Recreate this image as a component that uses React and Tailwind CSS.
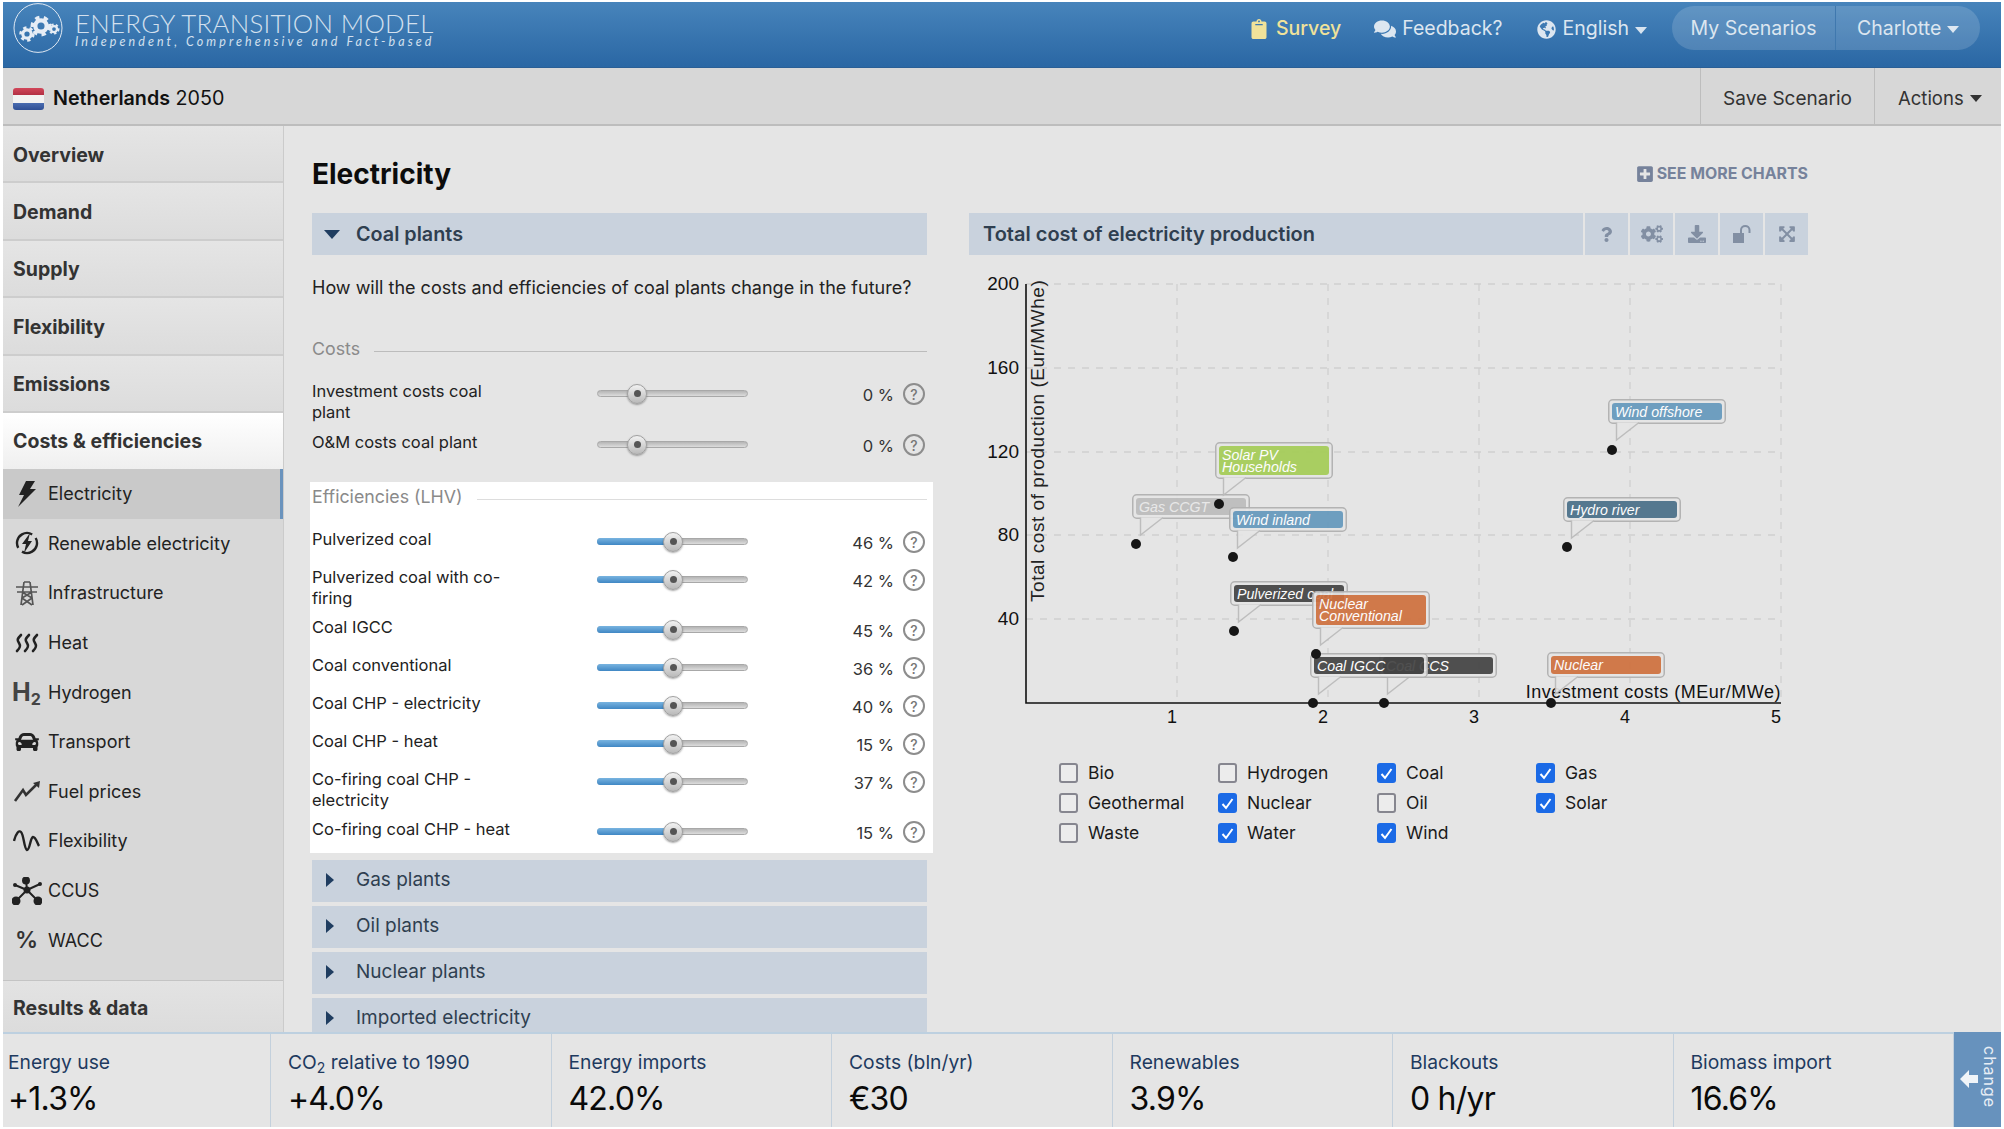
import React from 'react';
import { FaCar, FaClipboard, FaCogs, FaComments, FaDownload, FaExpandArrowsAlt, FaGlobeAmericas, FaPlusSquare, FaQuestion } from 'react-icons/fa';

const font = 'font-["Inter",sans-serif]';

const topNav = ['Overview', 'Demand', 'Supply', 'Flexibility', 'Emissions'];

const BoltIcon = () => (
  <svg width="24" height="28" viewBox="0 0 24 28">
    <path d="M11 1 H20 L15 9 H21 L3 27 L9 15 H4 Z" fill="#222" />
  </svg>
);
const RenewableIcon = () => (
  <svg width="26" height="26" viewBox="0 0 26 26">
    <circle cx="13" cy="13" r="10" fill="none" stroke="#222" strokeWidth="2.4" strokeDasharray="26 5.4" transform="rotate(-30 13 13)" />
    <path d="M16 3 L8 14 H12 L10 23 L18 11 H14 Z" fill="#222" />
  </svg>
);
const PylonIcon = () => (
  <svg width="26" height="26" viewBox="0 0 26 26" fill="none" stroke="#555" strokeWidth="1.7">
    <path d="M2 7 H24 M3 12 H23 M10 2 L7 25 M16 2 L19 25 M10 2 H16 M8 12 L18 18 M18 12 L8 18 M8 18 L18 25 M18 18 L8 25" />
  </svg>
);
const HeatIcon = () => (
  <svg width="26" height="20" viewBox="0 0 26 20" fill="none" stroke="#222" strokeWidth="2.6" strokeLinecap="round">
    <path d="M7 2 C3 6 3 7 5 10 C7 13 6 15 3 18" />
    <path d="M15 2 C11 6 11 7 13 10 C15 13 14 15 11 18" />
    <path d="M23 2 C19 6 19 7 21 10 C23 13 22 15 19 18" />
  </svg>
);
const FuelIcon = () => (
  <svg width="28" height="24" viewBox="0 0 28 24" fill="none" stroke="#333" strokeWidth="2.6">
    <path d="M2 22 L10 11 L13 16 L24 5" />
    <path d="M20 4 L27 2 L26 9 Z" fill="#333" stroke="none" />
  </svg>
);
const WaveIcon = () => (
  <svg width="28" height="24" viewBox="0 0 28 24" fill="none" stroke="#222" strokeWidth="2.4">
    <path d="M1 12 C3 4 6 1 8 3 C11 6 11 20 14 21 C17 21 17 9 20 8 C23 8 24 14 26 17" />
  </svg>
);
const NetworkIcon = () => (
  <svg width="30" height="28" viewBox="0 0 30 28" stroke="#222" strokeWidth="2" fill="#222">
    <path d="M15 13 L14 3 M15 13 L4 24 M15 13 L26 24 M15 13 L3 8 M15 13 L28 7" />
    <circle cx="14" cy="3.5" r="3" />
    <circle cx="15" cy="13" r="2.5" />
    <circle cx="4" cy="24" r="3.5" />
    <circle cx="26" cy="24" r="3.5" />
    <circle cx="3" cy="8" r="1" />
    <circle cx="28" cy="7" r="1" />
  </svg>
);
const UnlockIcon = () => (
  <svg width="20" height="20" viewBox="0 0 20 20" fill="none">
    <rect x="1" y="9" width="11" height="10" fill="currentColor" />
    <path d="M9 9 V6 C9 0.5 17.5 0.5 17.5 6 V9" stroke="currentColor" strokeWidth="2" />
  </svg>
);

const subNav = [
  { label: 'Electricity', icon: <BoltIcon />, active: true },
  { label: 'Renewable electricity', icon: <RenewableIcon /> },
  { label: 'Infrastructure', icon: <PylonIcon /> },
  { label: 'Heat', icon: <HeatIcon /> },
  { label: 'Hydrogen', icon: <span className="text-[25px] font-bold leading-none text-[#444]">H<sub className="text-[16px] leading-none">2</sub></span> },
  { label: 'Transport', icon: <FaCar size={24} className="text-[#222]" /> },
  { label: 'Fuel prices', icon: <FuelIcon /> },
  { label: 'Flexibility', icon: <WaveIcon /> },
  { label: 'CCUS', icon: <NetworkIcon /> },
  { label: 'WACC', icon: <span className="text-[23px] font-semibold leading-none text-[#333]">%</span> },
];

const costRows = [
  { label: 'Investment costs coal plant', value: 0, h: 'h-[51px]', knob: 39 },
  { label: 'O&M costs coal plant', value: 0, h: 'h-[38px]', knob: 39 },
];

const efficiencyRows = [
  { label: 'Pulverized coal', value: 46, h: 'h-[38px]' },
  { label: 'Pulverized coal with co-firing', value: 42, h: 'h-[50px]' },
  { label: 'Coal IGCC', value: 45, h: 'h-[38px]' },
  { label: 'Coal conventional', value: 36, h: 'h-[38px]' },
  { label: 'Coal CHP - electricity', value: 40, h: 'h-[38px]' },
  { label: 'Coal CHP - heat', value: 15, h: 'h-[38px]' },
  { label: 'Co-firing coal CHP - electricity', value: 37, h: 'h-[50px]' },
  { label: 'Co-firing coal CHP - heat', value: 15, h: 'h-[33px]' },
];

const kpis = [
  { label: 'Energy use', value: '+1.3%' },
  { label: <>CO<sub className="text-[14px]">2</sub> relative to 1990</>, value: '+4.0%' },
  { label: 'Energy imports', value: '42.0%' },
  { label: 'Costs (bln/yr)', value: '€30' },
  { label: 'Renewables', value: '3.9%' },
  { label: 'Blackouts', value: '0 h/yr' },
  { label: 'Biomass import', value: '16.6%' },
];

const filters = [
  ['Bio', false], ['Hydrogen', false], ['Coal', true], ['Gas', true],
  ['Geothermal', false], ['Nuclear', true], ['Oil', false], ['Solar', true],
  ['Waste', false], ['Water', true], ['Wind', true],
];

const labels = [
  { lines: ['Gas CCGT'], x: 1132, y: 494, h: 25, color: '#bdbdbd' },
  { lines: ['Solar PV', 'Households'], x: 1215, y: 442, h: 37, color: '#a5cd58' },
  { lines: ['Pulverized coal'], x: 1230, y: 581, h: 25, color: '#444444' },
  { lines: ['Wind inland'], x: 1229, y: 507, h: 25, color: '#6699bd' },
  { lines: ['Nuclear', 'Conventional'], x: 1312, y: 591, h: 38, color: '#cf713f' },
  { lines: ['Coal CCS'], x: 1379, y: 653, h: 25, color: '#444444' },
  { lines: ['Coal IGCC'], x: 1310, y: 653, h: 25, color: '#444444' },
  { lines: ['Nuclear'], x: 1547, y: 652, h: 26, color: '#cf713f' },
  { lines: ['Hydro river'], x: 1563, y: 497, h: 25, color: '#4b7089' },
  { lines: ['Wind offshore'], x: 1608, y: 399, h: 25, color: '#6699bd' },
];

const dots = [[1136, 544], [1219, 504], [1233, 557], [1234, 631], [1316, 654], [1313, 703], [1384, 703], [1551, 703], [1567, 547], [1612, 450]];

const Gear = ({ cx, cy, r }) => (
  <g>
    <circle cx={cx} cy={cy} r={r * 0.9} fill="none" stroke="#e6edf5" strokeWidth={r * 0.4} strokeDasharray={`${r * 0.45} ${r * 0.45}`} />
    <circle cx={cx} cy={cy} r={r * 0.6} fill="none" stroke="#e6edf5" strokeWidth={r * 0.45} />
  </g>
);

const Logo = () => (
  <svg width="50" height="50" viewBox="0 0 50 50" className="shrink-0">
    <ellipse cx="25" cy="25" rx="24" ry="24.4" fill="none" stroke="#dfe8f2" strokeWidth="1" />
    <Gear cx={14} cy={31} r={7} />
    <Gear cx={28} cy={23} r={9.5} />
    <Gear cx={41} cy={26} r={5} />
  </svg>
);

const Caret = ({ className = 'border-t-white/80' }) => (
  <span className={`inline-block w-0 h-0 border-x-[6px] border-x-transparent border-t-[7px] ${className}`} />
);

const Slider = ({ knob = 75, fill }) => (
  <div className="relative w-[151px] h-[7px] mt-[8px] rounded-full border border-[#a8a8a8] bg-gradient-to-b from-[#b5b5b5] to-[#dcdcdc] shrink-0">
    {fill && <div className="absolute -left-px -top-px h-[7px] w-[78px] rounded-l-full bg-gradient-to-b from-[#78b4e0] to-[#3f87c4]" />}
    <div
      className="absolute top-[-7.5px] w-5 h-5 -ml-2.5 rounded-full border border-[#a0a0a0] bg-gradient-to-b from-[#f2f2f2] to-[#b9b9b9] shadow-[0_1px_2px_rgba(0,0,0,0.35)] flex items-center justify-center"
      style={{ left: knob }}
    >
      <div className="w-[7px] h-[7px] rounded-full bg-[#555]" />
    </div>
  </div>
);

const SliderRow = ({ row, fill }) => (
  <div className={`flex items-start ${row.h}`}>
    <div className="w-[210px] -mt-px text-[16.5px] leading-[21px] text-[#222] shrink-0">{row.label}</div>
    <div className="ml-[75px]">
      <Slider knob={row.knob} fill={fill} />
    </div>
    <div className="w-[146px] pt-[3px] text-right text-[16.5px] leading-[21px] text-[#333] shrink-0">{row.value} %</div>
    <div className="ml-[9px] mt-px w-[22px] h-[22px] rounded-full border-2 border-[#8d8d8d] flex items-center justify-center text-[14px] font-medium text-[#777] shrink-0">?</div>
  </div>
);

const Section = ({ title, line }) => (
  <div className="flex items-center h-[21px]">
    <span className="text-[17.8px] text-[#8a8a8a]">{title}</span>
    <span className={`flex-1 ml-[14px] mt-[3px] h-px ${line}`} />
  </div>
);

const Accordion = ({ title }) => (
  <div className="flex items-center h-[42px] mb-[4px] bg-[#c9d2dd] shrink-0">
    <span className="ml-[14px] w-0 h-0 border-y-[7px] border-y-transparent border-l-[8px] border-l-[#1f3d60] -mt-[3px]" />
    <span className="ml-[22px] -mt-px text-[19px] text-[#2f3f50]">{title}</span>
  </div>
);

const Chart = () => {
  const gridX = [1177, 1328, 1479, 1630, 1781];
  const gridY = [284, 368, 452, 535, 619];
  return (
    <svg width="839" height="470" viewBox="969 262 839 470" className="block font-['Liberation_Sans',sans-serif]">
      {gridX.map((x) => <line key={x} x1={x} x2={x} y1="284" y2="703" stroke="#d0d0d0" strokeWidth="1.3" strokeDasharray="7 7" />)}
      {gridY.map((y) => <line key={y} x1="1026" x2="1781" y1={y} y2={y} stroke="#d0d0d0" strokeWidth="1.3" strokeDasharray="7 7" />)}
      <path d="M1026 284 V703 H1781" fill="none" stroke="#111" strokeWidth="1.6" />
      {['200', '160', '120', '80', '40'].map((t, i) => (
        <text key={t} x="1019" y={gridY[i] + 6} textAnchor="end" fontSize="19" fill="#111">{t}</text>
      ))}
      {['1', '2', '3', '4', '5'].map((t, i) => (
        <text key={t} x={gridX[i] - 5} y="723" textAnchor="middle" fontSize="18" fill="#111">{t}</text>
      ))}
      <text transform="translate(1044 602) rotate(-90)" fontSize="19" fill="#222" letterSpacing="0.55">Total cost of production (Eur/MWhe)</text>
      <text x="1781" y="698" textAnchor="end" fontSize="18" fill="#111" letterSpacing="0.5">Investment costs (MEur/MWe)</text>
      {labels.map((l) => (
        <g key={l.lines[0] + l.x} opacity="0.93">
          <rect x={l.x + 0.75} y={l.y + 0.75} width="116.5" height={l.h - 1.5} rx="4" fill="#e5e5e5" stroke="#b0b0b0" strokeWidth="1.5" />
          <rect x={l.x + 4} y={l.y + 4} width="110" height={l.h - 8} rx="3" fill={l.color} />
          <path d={`M${l.x + 8.5} ${l.y + l.h - 1.5} V${l.y + l.h + 16} L${l.x + 31} ${l.y + l.h - 1.5}`} fill="#e5e5e5" stroke="#bbb" strokeWidth="1.4" />
          {l.lines.map((line, i) => (
            <text key={line} x={l.x + 7} y={l.y + (l.lines.length > 1 ? 17.5 + i * 12.5 : 18)} fontSize="14.2" fontStyle="italic" fill={l.color === '#bdbdbd' ? '#e9e9e9' : '#fff'}>{line}</text>
          ))}
        </g>
      ))}
      {dots.map(([x, y]) => <circle key={x} cx={x} cy={y} r="5" fill="#161616" />)}
    </svg>
  );
};

const Checkbox = ({ checked }) => (
  <span className={`w-[19px] h-[20px] rounded-[3px] flex items-center justify-center shrink-0 ${checked ? 'bg-[#1b6ae6]' : 'border-2 border-[#86868f] bg-[#ececec]'}`}>
    {checked && (
      <svg width="13" height="13" viewBox="0 0 13 13" fill="none" stroke="#fff" strokeWidth="2">
        <path d="M1.5 7 L5 11 L11.5 2" />
      </svg>
    )}
  </span>
);

export default function App() {
  return (
    <div className={`${font} h-screen w-full overflow-hidden bg-white pt-[2px] pb-[2px] px-[3px] flex flex-col`}>
      {/* top bar */}
      <header className="h-[66px] shrink-0 flex items-start bg-gradient-to-b from-[#4784bb] to-[#2a67a4] border-b border-[#2a5f95]">
        <div className="ml-[10px] mt-[1px]"><Logo /></div>
        <div className="ml-[12px] mt-[6px] font-['Lato',sans-serif] text-[#d3e0ee]">
          <div className="text-[25.8px] font-light leading-[30px] tracking-[0.3px] whitespace-nowrap">ENERGY TRANSITION MODEL</div>
          <div className="-mt-[2px] text-[12.5px] italic leading-[12px] tracking-[3.08px] whitespace-nowrap">Independent, Comprehensive and Fact-based</div>
        </div>
        <nav className="ml-auto mr-[21px] mt-[4px] flex items-center h-[44px] text-[19.5px] text-[#dce6f0]">
          <FaClipboard size={20} className="text-[#f0e29a] mt-[2px]" />
          <span className="ml-[7px] mt-[2px] font-medium text-[#f0e29a]">Survey</span>
          <FaComments size={22} className="ml-[33px] mt-[2px]" />
          <span className="ml-[6px] mt-[2px]">Feedback?</span>
          <FaGlobeAmericas size={19} className="ml-[34px] mt-[2px]" />
          <span className="ml-[7px] mt-[2px]">English</span>
          <span className="ml-[6px]"><Caret /></span>
          <div className="ml-[25px] flex h-[44px] rounded-full bg-white/15">
            <div className="w-[164px] pt-[2px] flex items-center justify-center border-r border-[#3f78ae]">My Scenarios</div>
            <div className="w-[144px] pt-[2px] flex items-center pl-[21px] gap-[6px]">Charlotte <Caret /></div>
          </div>
        </nav>
      </header>

      {/* scenario bar */}
      <div className="h-[58px] shrink-0 flex items-center bg-[#d7d7d7] border-b-2 border-[#bdbdbd]">
        <div className="ml-[10px] mt-[6px] w-[31px] h-[22px] rounded-[3px] overflow-hidden flex flex-col">
          <div className="flex-1 bg-gradient-to-b from-[#d2475a] to-[#b23044]" />
          <div className="flex-1 bg-[#f2f2f2]" />
          <div className="flex-1 bg-gradient-to-b from-[#4a6cb0] to-[#2f4f95]" />
        </div>
        <div className="ml-[9px] mt-[6px] text-[19.7px] text-[#111]"><span className="font-semibold">Netherlands</span> 2050</div>
        <div className="ml-auto h-full w-[174px] pt-[6px] flex items-center justify-center border-l border-[#bdbdbd] text-[19px] text-[#333]">Save Scenario</div>
        <div className="h-full w-[127px] pt-[5px] flex items-center pl-[23px] gap-[6px] border-l border-[#bdbdbd] text-[18.5px] text-[#333]">Actions <Caret className="border-t-[#333]" /></div>
      </div>

      <div className="flex-1 min-h-0 flex bg-[#e5e5e5]">
        {/* sidebar */}
        <aside className="w-[281px] shrink-0 flex flex-col bg-[#d8d8d8] border-r border-[#cbcbcb]">
          {topNav.map((item) => (
            <div key={item} className="h-[57.4px] shrink-0 pt-[3px] flex items-center pl-[10px] text-[19.5px] font-bold text-[#333] bg-gradient-to-b from-[#e5e5e5] to-[#dcdcdc] border-b-2 border-[#cdcdcd]">{item}</div>
          ))}
          <div className="h-[56px] shrink-0 pt-[2px] flex items-center pl-[10px] text-[19.5px] font-bold text-[#333] bg-gradient-to-b from-white to-[#efefef]">Costs &amp; efficiencies</div>
          <div className="flex-1">
            {subNav.map((s) => (
              <div key={s.label} className={`h-[49.6px] flex items-center text-[18px] text-[#222] ${s.active ? 'bg-[#c9c9c9] border-r-[3px] border-[#6a93bd]' : ''}`}>
                <span className="w-[43px] flex justify-center items-center ml-[2px] shrink-0">{s.icon}</span>
                {s.label}
              </div>
            ))}
          </div>
          <div className="h-[52px] shrink-0 pt-[4px] flex items-center pl-[10px] text-[19.5px] font-bold text-[#333] bg-gradient-to-b from-[#e3e3e3] to-[#dcdcdc] border-t border-[#c4c4c4]">Results &amp; data</div>
        </aside>

        {/* main content */}
        <main className="flex-1 min-w-0 overflow-hidden pl-[28px]">
          <div className="w-[1496px] h-[87px] flex items-start justify-between">
            <h1 className="mt-[28px] text-[28px] font-bold leading-[40px] text-[#0c0c0c]">Electricity</h1>
            <div className="mt-[38px] flex items-center gap-[3px] text-[15.9px] font-bold leading-[20px] text-[#76829b]">
              <FaPlusSquare size={18} /> SEE MORE CHARTS
            </div>
          </div>
          <div className="flex items-start">
            {/* sliders column */}
            <div className="w-[615px] shrink-0">
              <div className="flex items-center h-[42px] bg-[#c9d2dd]">
                <span className="ml-[12px] w-0 h-0 border-x-[8px] border-x-transparent border-t-[9px] border-t-[#1f3d60]" />
                <span className="ml-[16px] mt-[2px] text-[19.8px] font-semibold text-[#2f3f50]">Coal plants</span>
              </div>
              <p className="mt-[22px] h-[39px] text-[18px] leading-[22px] text-[#222] whitespace-nowrap">How will the costs and efficiencies of coal plants change in the future?</p>
              <div className="mt-[23px]"><Section title="Costs" line="bg-[#bcbcbc]" /></div>
              <div className="mt-[22px]">
                {costRows.map((r) => <SliderRow key={r.label} row={r} />)}
              </div>
              <div className="-mx-[2px] -mr-[6px] mt-[11px] px-[2px] pr-[6px] pt-[5px] bg-white">
                <Section title="Efficiencies (LHV)" line="bg-[#dddddd]" />
                <div className="mt-[22px]">
                  {efficiencyRows.map((r) => <SliderRow key={r.label} row={r} fill />)}
                </div>
              </div>
              <div className="mt-[7px]">
                {['Gas plants', 'Oil plants', 'Nuclear plants', 'Imported electricity'].map((t) => <Accordion key={t} title={t} />)}
              </div>
            </div>

            {/* chart column */}
            <div className="ml-[42px] w-[839px] shrink-0">
              <div className="flex gap-[2px] h-[42px]">
                <div className="flex-1 flex items-center pl-[14px] bg-[#c9d2dd] text-[20px] font-semibold text-[#2f3f50]">Total cost of electricity production</div>
                {[<FaQuestion size={15} />, <FaCogs size={22} />, <FaDownload size={18} />, <UnlockIcon />, <FaExpandArrowsAlt size={18} />].map((icon, i) => (
                  <div key={i} className="w-[43px] flex items-center justify-center bg-[#c9d2dd] text-[#828fa3]">{icon}</div>
                ))}
              </div>
              <div className="mt-[7px]"><Chart /></div>
              <div className="ml-[90px] mt-[26px] grid grid-cols-[159px_159px_159px_159px] auto-rows-[30px] text-[17.5px] text-[#1a1a1a]">
                {filters.map(([name, checked]) => (
                  <div key={name} className="flex items-center gap-[10px]">
                    <Checkbox checked={checked} />
                    {name}
                  </div>
                ))}
              </div>
            </div>
          </div>
        </main>
      </div>

      {/* kpi footer */}
      <footer className="h-[95px] shrink-0 flex bg-[#e5e5e5] border-t-2 border-[#bdd0e0]">
        {kpis.map((k, i) => (
          <div key={i} className={`${i === 0 ? 'w-[268px] pl-[5px]' : 'w-[280.5px] pl-[17px]'} h-[93px] shrink-0 border-r border-[#c3d0dc]`}>
            <div className="mt-[15px] h-[26px] text-[19.3px] leading-[26px] text-[#1e3a5f] whitespace-nowrap">{k.label}</div>
            <div className="mt-[6px] text-[32px] leading-[36px] text-[#0a0a0a] whitespace-nowrap tracking-[-0.8px]">{k.value}</div>
          </div>
        ))}
        <div className="flex-1 -mt-[2px] h-[95px] relative flex items-center bg-[#6792bd]">
          <svg width="20" height="20" viewBox="0 0 20 20" className="ml-[5px] mt-[-2px]">
            <path d="M1 10 L10 1 V6 H19 V14 H10 V19 Z" fill="#f0f4f8" />
          </svg>
          <span className="absolute left-[24px] top-[14px] text-[16px] leading-[24px] tracking-[1px] text-[#e8eef5] [writing-mode:vertical-rl]">change</span>
        </div>
      </footer>
    </div>
  );
}
